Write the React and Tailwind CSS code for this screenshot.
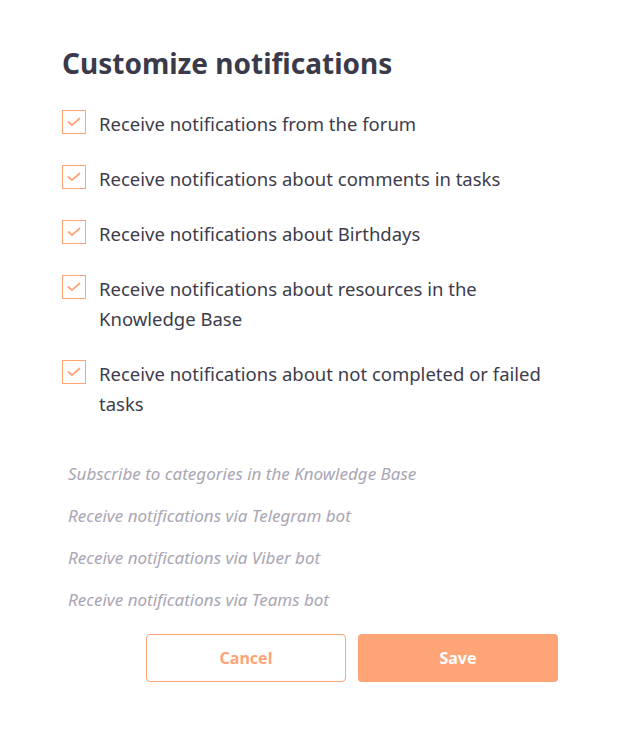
import React, { useState } from 'react'

const items = [
  'Receive notifications from the forum',
  'Receive notifications about comments in tasks',
  'Receive notifications about Birthdays',
  'Receive notifications about resources in the Knowledge Base',
  'Receive notifications about not completed or failed tasks',
]

const links = [
  'Subscribe to categories in the Knowledge Base',
  'Receive notifications via Telegram bot',
  'Receive notifications via Viber bot',
  'Receive notifications via Teams bot',
]

const Check = ({ checked, onClick }) => (
  <button
    onClick={onClick}
    className="flex h-6 w-6 shrink-0 items-center justify-center border border-[#ffa477] bg-white"
  >
    {checked && (
      <svg width="14" height="10" viewBox="0 0 14 10" fill="none">
        <path d="M1.5 5 L5 8.2 L12.5 1.5" stroke="#ffa477" strokeWidth="1.8" strokeLinecap="round" strokeLinejoin="round" />
      </svg>
    )}
  </button>
)

const App = () => {
  const [checked, setChecked] = useState(items.map(() => true))

  const toggle = (i) => {
    const next = [...checked]
    next[i] = !next[i]
    setChecked(next)
  }

  return (
    <div className="min-h-screen bg-white" style={{ fontFamily: '"Noto Sans", "Open Sans", sans-serif' }}>
      <div className="w-[496px] pl-[62px] pt-[43px] box-content">
        <h1 className="text-[28px] font-bold leading-[40px] text-[#3b3a4a]">Customize notifications</h1>

        <div className="mt-[27px] flex flex-col gap-[25px]">
          {items.map((t, i) => (
            <div key={i} className="flex items-start gap-[13px]">
              <Check checked={checked[i]} onClick={() => toggle(i)} />
              <span className="-mt-[1px] pb-[1px] text-[18.5px] leading-[30px] text-[#3d3c4c]">{t}</span>
            </div>
          ))}
        </div>

        <div className="mt-[42px] flex flex-col gap-[18px] pl-[6px]">
          {links.map((t, i) => (
            <a key={i} href="#" className="text-[17px] italic leading-[24px] text-[#aaa6b4]">
              {t}
            </a>
          ))}
        </div>

        <div className="mt-[22px] flex justify-end gap-3">
          <button className="h-12 w-[200px] rounded border border-[#ffa477] bg-white text-[16px] font-bold text-[#ffa477]">
            Cancel
          </button>
          <button className="h-12 w-[200px] rounded bg-[#ffa477] text-[16px] font-bold text-white">
            Save
          </button>
        </div>
      </div>
    </div>
  )
}

export default App
